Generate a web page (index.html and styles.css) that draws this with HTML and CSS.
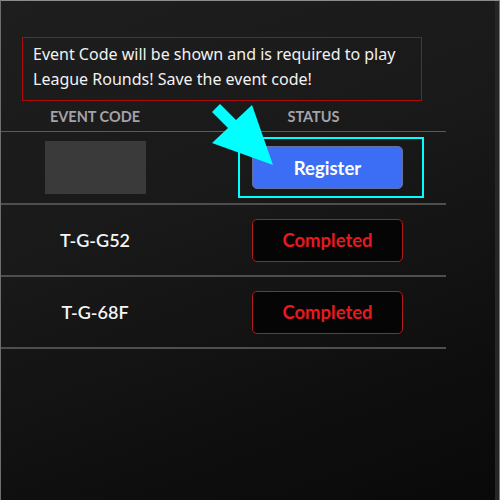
FILE: index.html
```html
<!DOCTYPE html>
<html>
<head>
  <title>League Events</title>
  <link rel="stylesheet" href="styles.css">
</head>
<body>
  <div class="frame">
    <div class="notice">
      <p>Event Code will be shown and is required to play League Rounds! Save the event code!</p>
    </div>

    <div class="table">
      <div class="row head">
        <div class="cell code">EVENT CODE</div>
        <div class="cell status">STATUS</div>
      </div>

      <div class="row pending">
        <div class="cell code"><div class="hidden-code"></div></div>
        <div class="cell status"><button class="btn register">Register</button></div>
      </div>

      <div class="row">
        <div class="cell code">T-G-G52</div>
        <div class="cell status"><button class="btn done">Completed</button></div>
      </div>

      <div class="row">
        <div class="cell code">T-G-68F</div>
        <div class="cell status"><button class="btn done">Completed</button></div>
      </div>
    </div>
  </div>

  <!-- annotation drawn over the screenshot -->
  <div class="highlight"></div>
  <svg class="arrow" width="500" height="500" viewBox="0 0 500 500">
    <polygon points="212,112 220,104 236,120 252,105 273,165 212,143 228,128" fill="#00ffff"/>
  </svg>
</body>
</html>
```

FILE: styles.css
```css
body {
  margin: 0;
  width: 500px;
  height: 500px;
  position: relative;
  overflow: hidden;
  font-family: "Lato", "Noto Sans", sans-serif;
}

.frame {
  box-sizing: border-box;
  width: 500px;
  height: 500px;
  border-top: 1px solid #8c8c8c;
  border-left: 1px solid #6e6e6e;
  border-right: 1px solid #7a7a7a;
  box-shadow: inset -4px 0 0 #262626;
  background: linear-gradient(160deg, #1e1e1e 0%, #191919 40%, #0f0f0f 75%, #090909 100%);
  display: flex;
  flex-direction: column;
}

.notice {
  box-sizing: border-box;
  width: 400px;
  height: 64px;
  margin: 36px 0 0 21px;
  padding: 4px 10px 0 10px;
  border: 1px solid #b00a0a;
}

.notice p {
  margin: 0;
  font-family: "Noto Sans", sans-serif;
  font-size: 16px;
  line-height: 25px;
  color: #f2f2f2;
}

.table {
  width: 445px;
  display: flex;
  flex-direction: column;
}

.row {
  box-sizing: border-box;
  display: flex;
  align-items: center;
  height: 72px;
  border-bottom: 2px solid #4e4e4e;
}

.row.pending {
  height: 73px;
}

.row.head {
  height: 31px;
  border-bottom: 1px solid #3d5aa8;
}

.cell.code {
  width: 188px;
  display: flex;
  justify-content: center;
  color: #f5f5f5;
  font-size: 18px;
  font-weight: 600;
}

.cell.status {
  flex: 1;
  padding-left: 63px;
}

.head .cell {
  font-size: 14.5px;
  font-weight: 700;
  color: #a3a3ab;
}

.head .cell.status {
  padding-left: 0;
  padding-right: 8px;
  text-align: center;
}

.hidden-code {
  width: 101px;
  height: 53px;
  background: #3a3a3a;
}

.btn {
  box-sizing: border-box;
  width: 151px;
  height: 43px;
  font-family: "Lato", sans-serif;
  font-size: 18.5px;
  font-weight: 700;
  border-radius: 5px;
  padding: 0;
}

.register {
  background: #3c6ef5;
  border: 1px solid #66709a;
  color: #ffffff;
}

.done {
  background: #050505;
  border: 1.5px solid #b01c1c;
  color: #e8191f;
}

.highlight {
  position: absolute;
  left: 238px;
  top: 137px;
  width: 186px;
  height: 61px;
  box-sizing: border-box;
  border: 2px solid #00ffff;
}

.arrow {
  position: absolute;
  left: 0;
  top: 0;
  pointer-events: none;
}
```
